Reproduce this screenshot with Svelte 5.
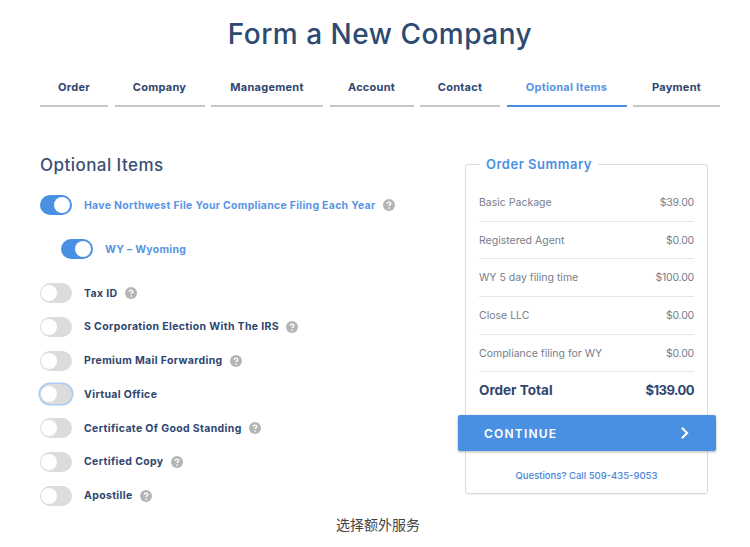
<script>
  const steps = [
    { label: "Order", w: 68 },
    { label: "Company", w: 90 },
    { label: "Management", w: 112 },
    { label: "Account", w: 84 },
    { label: "Contact", w: 80 },
    { label: "Optional Items", w: 120, active: true },
    { label: "Payment", w: 87 },
  ];
  const columns = steps.map((s) => s.w + "fr").join(" ");

  const items = [
    { label: "Tax ID", help: true },
    { label: "S Corporation Election With The IRS", help: true },
    { label: "Premium Mail Forwarding", help: true },
    { label: "Virtual Office", focus: true },
    { label: "Certificate Of Good Standing", help: true },
    { label: "Certified Copy", help: true },
    { label: "Apostille", help: true },
  ];

  const lines = [
    ["Basic Package", "$39.00"],
    ["Registered Agent", "$0.00"],
    ["WY 5 day filing time", "$100.00"],
    ["Close LLC", "$0.00"],
    ["Compliance filing for WY", "$0.00"],
  ];
</script>

{#snippet help()}
  <svg class="help" viewBox="0 0 12 12" width="12" height="12" aria-hidden="true">
    <circle cx="6" cy="6" r="6" fill="#b5b5b5" />
    <path d="M4.2 4.7c0-1 .8-1.6 1.8-1.6s1.8.6 1.8 1.5c0 1.3-1.7 1.3-1.7 2.5" fill="none" stroke="#fff" stroke-width="1.4" />
    <circle cx="6.1" cy="9" r=".85" fill="#fff" />
  </svg>
{/snippet}

<div class="page">
  <h1>Form a New Company</h1>

  <nav class="steps" style="grid-template-columns: {columns}">
    {#each steps as step}
      <div class="step" class:active={step.active}>{step.label}</div>
    {/each}
  </nav>

  <div class="columns">
    <section class="options">
      <h2>Optional Items</h2>

      <div class="row first">
        <span class="toggle on"><i></i></span>
        <span class="name blue">Have Northwest File Your Compliance Filing Each Year</span>
        {@render help()}
      </div>
      <div class="row sub">
        <span class="toggle on"><i></i></span>
        <span class="name blue">WY – Wyoming</span>
      </div>

      {#each items as item}
        <div class="row">
          <span class="toggle" class:focus={item.focus}><i></i></span>
          <span class="name">{item.label}</span>
          {#if item.help}{@render help()}{/if}
        </div>
      {/each}
    </section>

    <aside class="summary">
      <div class="legend">Order Summary</div>
      <ul>
        {#each lines as [name, price]}
          <li><span>{name}</span><span class="price">{price}</span></li>
        {/each}
      </ul>
      <div class="total"><span class="label">Order Total</span><span class="sum">$139.00</span></div>
      <button type="button">
        <span>CONTINUE</span>
        <svg viewBox="0 0 10 16" width="9" height="14" aria-hidden="true">
          <path d="M2 2l6 6-6 6" fill="none" stroke="#fff" stroke-width="2.3" />
        </svg>
      </button>
      <div class="questions">Questions? Call 509-435-9053</div>
    </aside>
  </div>

  <p class="caption">选择额外服务</p>
</div>

<style>
  :global(body) {
    background: #fff;
  }
  .page {
    width: 750px;
    height: 547px;
    box-sizing: border-box;
    padding: 16px 30px 0 40px;
    font-family: Inter, "Noto Sans CJK SC", sans-serif;
    color: #2f4670;
    overflow: hidden;
  }
  h1 {
    margin: 0;
    font-size: 28px;
    line-height: 36px;
    font-weight: 500;
    letter-spacing: 0.5px;
    text-align: center;
    color: #2d4a72;
  }
  .steps {
    display: grid;
    gap: 6.5px;
    margin-top: 20px;
  }
  .step {
    height: 35px;
    padding-top: 8px;
    box-sizing: border-box;
    border-bottom: 2px solid #c8c8c8;
    text-align: center;
    font-size: 11px;
    line-height: 14px;
    font-weight: 700;
    letter-spacing: 0.25px;
    white-space: nowrap;
  }
  .step.active {
    color: #5a95e4;
    border-bottom-color: #4a90e2;
  }
  .columns {
    display: flex;
    justify-content: space-between;
    margin-top: 47px;
  }
  .options {
    width: 400px;
  }
  h2 {
    margin: 0;
    font-size: 17px;
    line-height: 22px;
    font-weight: 500;
    letter-spacing: 0.45px;
    color: #3a4f74;
  }
  .row {
    display: flex;
    align-items: center;
    height: 20px;
    margin-top: 13.75px;
  }
  .row.first {
    margin-top: 19px;
  }
  .row.sub {
    margin: 24px 0 24px 21px;
  }
  .toggle {
    position: relative;
    flex: none;
    width: 32px;
    height: 20px;
    border-radius: 10px;
    background: #dcdcdc;
    margin-right: 12px;
  }
  .toggle i {
    position: absolute;
    top: 2px;
    left: 1px;
    width: 16px;
    height: 16px;
    border-radius: 50%;
    background: #fff;
  }
  .toggle.on {
    background: #4a90e2;
  }
  .toggle.on i {
    left: 14px;
  }
  .toggle.focus {
    box-shadow: 0 0 0 1.5px #a9cdf3;
  }
  .name {
    font-size: 10.5px;
    font-weight: 700;
    letter-spacing: 0.35px;
    color: #2f4670;
    white-space: nowrap;
  }
  .name.blue {
    color: #5a95e4;
    letter-spacing: 0.28px;
  }
  .help {
    flex: none;
    margin-left: 7px;
  }
  .summary {
    position: relative;
    box-sizing: border-box;
    width: 243px;
    height: 330px;
    margin: 10px 12px 0 0;
    padding: 19px 13px 0;
    border: 1px solid #dcdcdc;
    border-radius: 3px;
    box-shadow: 0 1px 1px rgba(0, 0, 0, 0.06);
  }
  .legend {
    position: absolute;
    top: -10px;
    left: 14px;
    padding: 0 6px;
    background: #fff;
    font-size: 13px;
    line-height: 18px;
    font-weight: 600;
    letter-spacing: 0.5px;
    color: #4a90e2;
  }
  ul {
    margin: 0;
    padding: 0;
    list-style: none;
  }
  li {
    display: flex;
    justify-content: space-between;
    align-items: center;
    height: 37.7px;
    box-sizing: border-box;
    border-bottom: 1px solid #e6e6e6;
    font-size: 10.5px;
    color: #777e8c;
  }
  .price {
    letter-spacing: -0.2px;
  }
  .total {
    display: flex;
    justify-content: space-between;
    align-items: center;
    height: 36px;
    font-size: 13px;
    font-weight: 700;
    color: #2f4670;
  }
  .total .label {
    font-size: 13.5px;
  }
  .total .sum {
    letter-spacing: -0.5px;
  }
  button {
    display: flex;
    justify-content: space-between;
    align-items: center;
    box-sizing: border-box;
    width: 258px;
    height: 36px;
    margin: 7px 0 0 -21px;
    padding: 0 27px 0 26px;
    border: 0;
    border-radius: 2px;
    background: #4a90e2;
    box-shadow: 0 1px 3px rgba(0, 0, 0, 0.3);
    color: #fff;
    font: 600 12px Inter, sans-serif;
    letter-spacing: 1.2px;
  }
  .questions {
    margin-top: 18px;
    text-align: center;
    font-size: 9.5px;
    line-height: 14px;
    font-weight: 500;
    color: #4a86d8;
  }
  .caption {
    margin: 11px 0 0 -37px;
    width: 750px;
    text-align: center;
    font-size: 14px;
    line-height: 16px;
    color: #444;
  }
</style>
